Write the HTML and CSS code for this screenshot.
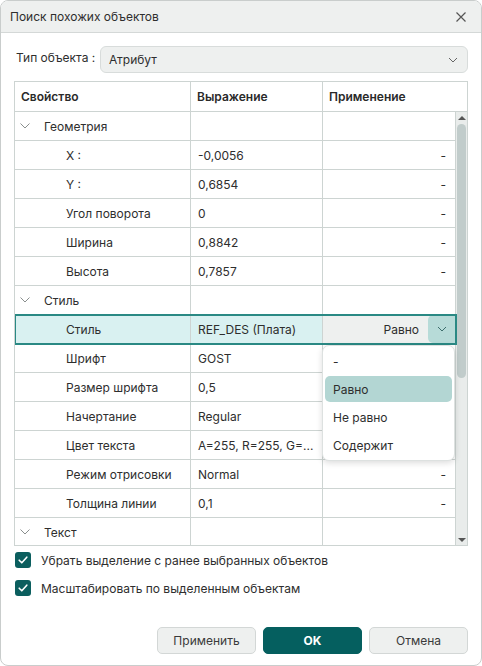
FILE: index.html
```html
<!DOCTYPE html>
<html lang="ru">
<head>
<meta charset="utf-8">
<title>Поиск похожих объектов</title>
<link rel="stylesheet" href="styles.css">
</head>
<body>
<div class="window">
  <div class="titlebar">
    <span class="title">Поиск похожих объектов</span>
    <svg class="close" width="12" height="12" viewBox="0 0 12 12"><path d="M1.5 1.5 L10.5 10.5 M10.5 1.5 L1.5 10.5" stroke="#555" stroke-width="1.2" fill="none"/></svg>
  </div>
  <div class="content">
    <div class="type-row">
      <span class="type-label">Тип объекта :</span>
      <div class="select">
        <span>Атрибут</span>
        <svg width="10" height="6" viewBox="0 0 10 6"><path d="M1 1 L5 5 L9 1" stroke="#666" stroke-width="1" fill="none"/></svg>
      </div>
    </div>

    <div class="grid">
      <div class="grid-head">
        <div class="hc c1">Свойство</div>
        <div class="hc c2">Выражение</div>
        <div class="hc c3h">Применение</div>
      </div>
      <div class="grid-body">
        <div class="rows">
          <div class="row group"><div class="cell c1"><svg class="chev" width="10" height="6" viewBox="0 0 10 6"><path d="M0.5 0.5 L5 5 L9.5 0.5" stroke="#8a8f8e" stroke-width="1" fill="none"/></svg>Геометрия</div><div class="cell c2"></div><div class="cell c3"></div></div>
          <div class="row"><div class="cell c1 child">X :</div><div class="cell c2">-0,0056</div><div class="cell c3">-</div></div>
          <div class="row"><div class="cell c1 child">Y :</div><div class="cell c2">0,6854</div><div class="cell c3">-</div></div>
          <div class="row"><div class="cell c1 child">Угол поворота</div><div class="cell c2">0</div><div class="cell c3">-</div></div>
          <div class="row"><div class="cell c1 child">Ширина</div><div class="cell c2">0,8842</div><div class="cell c3">-</div></div>
          <div class="row"><div class="cell c1 child">Высота</div><div class="cell c2">0,7857</div><div class="cell c3">-</div></div>
          <div class="row group"><div class="cell c1"><svg class="chev" width="10" height="6" viewBox="0 0 10 6"><path d="M0.5 0.5 L5 5 L9.5 0.5" stroke="#8a8f8e" stroke-width="1" fill="none"/></svg>Стиль</div><div class="cell c2"></div><div class="cell c3"></div></div>
          <div class="row selected"><div class="cell c1 child">Стиль</div><div class="cell c2">REF_DES (Плата)</div><div class="cell c3 combo"><span class="combo-val">Равно</span><span class="combo-btn"><svg width="10" height="6" viewBox="0 0 10 6"><path d="M1 1 L5 5 L9 1" stroke="#3d6e6c" stroke-width="1" fill="none"/></svg></span></div></div>
          <div class="row"><div class="cell c1 child">Шрифт</div><div class="cell c2">GOST</div><div class="cell c3">-</div></div>
          <div class="row"><div class="cell c1 child">Размер шрифта</div><div class="cell c2">0,5</div><div class="cell c3">-</div></div>
          <div class="row"><div class="cell c1 child">Начертание</div><div class="cell c2">Regular</div><div class="cell c3">-</div></div>
          <div class="row"><div class="cell c1 child">Цвет текста</div><div class="cell c2">A=255, R=255, G=...</div><div class="cell c3">-</div></div>
          <div class="row"><div class="cell c1 child">Режим отрисовки</div><div class="cell c2">Normal</div><div class="cell c3">-</div></div>
          <div class="row"><div class="cell c1 child">Толщина линии</div><div class="cell c2">0,1</div><div class="cell c3">-</div></div>
          <div class="row group"><div class="cell c1"><svg class="chev" width="10" height="6" viewBox="0 0 10 6"><path d="M0.5 0.5 L5 5 L9.5 0.5" stroke="#8a8f8e" stroke-width="1" fill="none"/></svg>Текст</div><div class="cell c2"></div><div class="cell c3"></div></div>
        </div>
        <div class="scrollbar">
          <svg class="arrow" width="12" height="10" viewBox="0 0 12 10"><path d="M2 7 L6 3 L10 7 Z" fill="#555"/></svg>
          <div class="thumb-area"><div class="thumb"></div></div>
          <svg class="arrow" width="12" height="10" viewBox="0 0 12 10"><path d="M2 3 L10 3 L6 7 Z" fill="#555"/></svg>
        </div>
      </div>

      <div class="popup">
        <div class="item">-</div>
        <div class="item active">Равно</div>
        <div class="item">Не равно</div>
        <div class="item">Содержит</div>
      </div>
    </div>

    <div class="checks">
      <label class="check"><span class="box"><svg width="12" height="12" viewBox="0 0 12 12"><path d="M2.2 6.2 L4.8 8.8 L9.8 3.2" stroke="#fff" stroke-width="1.6" fill="none" stroke-linecap="round" stroke-linejoin="round"/></svg></span>Убрать выделение с ранее выбранных объектов</label>
      <label class="check"><span class="box"><svg width="12" height="12" viewBox="0 0 12 12"><path d="M2.2 6.2 L4.8 8.8 L9.8 3.2" stroke="#fff" stroke-width="1.6" fill="none" stroke-linecap="round" stroke-linejoin="round"/></svg></span>Масштабировать по выделенным объектам</label>
    </div>

    <div class="buttons">
      <button class="btn">Применить</button>
      <button class="btn primary">OK</button>
      <button class="btn">Отмена</button>
    </div>
  </div>
</div>
</body>
</html>
```

FILE: styles.css
```css
* { box-sizing: border-box; }
html, body { margin: 0; padding: 0; }
body {
  font-family: Inter, "Noto Sans", sans-serif;
  font-size: 12px;
  color: #2e2e2e;
  background: #ffffff;
}
.window {
  width: 482px;
  height: 666px;
  border: 1px solid #c9cdcc;
  border-radius: 8px;
  overflow: hidden;
  background: #fff;
  display: flex;
  flex-direction: column;
}
.titlebar {
  height: 32px;
  flex: none;
  background: #eef0ef;
  border-bottom: 1px solid #d4d8d7;
  display: flex;
  align-items: center;
  justify-content: space-between;
  padding: 0 14px 0 9px;
}
.title { font-size: 12px; color: #2e2e2e; }
.content {
  padding: 13px 13px 0 13px;
  display: flex;
  flex-direction: column;
}
.type-row {
  display: flex;
  align-items: center;
  height: 27px;
}
.type-label {
  width: 86px;
  flex: none;
  padding-left: 2px;
  margin-top: -5px;
  white-space: nowrap;
}
.select {
  flex: 1;
  height: 27px;
  background: #eef0ef;
  border: 1px solid #d8dcdb;
  border-radius: 6px;
  display: flex;
  align-items: center;
  justify-content: space-between;
  padding: 0 9px 0 8px;
}
.grid {
  margin-top: 8px;
  border: 1px solid #cdd4d2;
  position: relative;
}
.grid-head {
  display: flex;
  height: 30px;
  border-bottom: 1px solid #cdd4d2;
}
.hc {
  font-weight: 600;
  display: flex;
  align-items: center;
  padding-left: 6px;
  color: #2a2a2a;
}
.c1 { width: 176px; flex: none; border-right: 1px solid #cdd4d2; }
.c2 { width: 132px; flex: none; border-right: 1px solid #cdd4d2; }
.c3 { width: 133px; flex: none; border-right: 1px solid #cdd4d2; }
.c3h { flex: 1; }
.grid-head .c2 { padding-left: 6px; }
.grid-body {
  display: flex;
  height: 433px;
  overflow: hidden;
}
.rows { width: 441px; flex: none; }
.row {
  display: flex;
  height: 29px;
  border-bottom: 1px solid #cdd4d2;
}
.cell {
  display: flex;
  align-items: center;
  padding-left: 7px;
  white-space: nowrap;
  overflow: hidden;
}
.cell.c1.child { padding-left: 51px; }
.cell.c3 { justify-content: flex-end; padding-right: 9px; padding-left: 0; }
.group .c1 { padding-left: 5px; }
.chev { margin-right: 14px; margin-top: 0; }
.row.selected {
  outline: 2px solid #2a8984;
  outline-offset: -1px;
  position: relative;
  z-index: 1;
}
.row.selected .c1, .row.selected .c2 { background: #d9f1f1; }
.cell.combo {
  background: #eef0ef;
  padding-right: 0;
  justify-content: flex-end;
}
.combo-val { margin-right: 9px; }
.combo-btn {
  width: 27px;
  align-self: stretch;
  background: #b7dbd8;
  border-radius: 5px 0 0 5px;
  display: flex;
  align-items: center;
  justify-content: center;
}
.scrollbar {
  width: 12px;
  flex: none;
  background: #e9eceb;
  display: flex;
  flex-direction: column;
  height: 433px;
}
.arrow { display: block; flex: none; margin-top: 1px; }
.thumb-area { flex: 1; padding: 1px 2px 0 1px; }
.thumb {
  width: 9px;
  height: 254px;
  background: #c1cccb;
  border-radius: 5px;
}
.popup {
  position: absolute;
  left: 307px;
  top: 263px;
  width: 133px;
  height: 116px;
  background: #fff;
  border: 1px solid #dde1e0;
  border-radius: 7px;
  box-shadow: 0 2px 6px rgba(0,0,0,0.14);
  padding: 2px 2px;
  z-index: 5;
}
.item {
  height: 26px;
  margin-bottom: 2px;
  display: flex;
  align-items: center;
  padding-left: 8px;
  border-radius: 5px;
}
.item.active { background: #b3d6d3; }
.checks {
  display: flex;
  flex-direction: column;
  gap: 12px;
  margin-top: 6px;
}
.check {
  display: flex;
  align-items: center;
  height: 16px;
}
.box {
  width: 16px;
  height: 16px;
  border-radius: 3px;
  background: #0b5e5e;
  display: flex;
  align-items: center;
  justify-content: center;
  margin-left: 1px;
  margin-right: 10px;
}
.buttons {
  display: flex;
  justify-content: flex-end;
  gap: 7px;
  margin-top: 31px;
}
.btn {
  width: 99px;
  height: 27px;
  font-family: Inter, "Noto Sans", sans-serif;
  font-size: 12px;
  color: #3a3a3a;
  background: #eef0ef;
  border: 1px solid #d3d7d6;
  border-radius: 5px;
  padding: 0;
}
.btn.primary {
  background: #055f5f;
  border-color: #055f5f;
  color: #fff;
  font-weight: 700;
}
```
